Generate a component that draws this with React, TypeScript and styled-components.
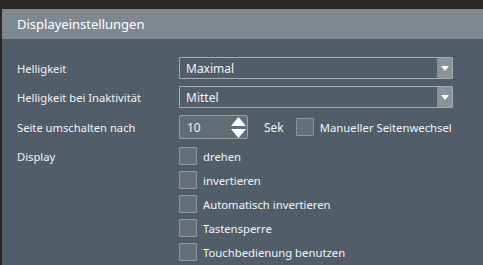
import { createGlobalStyle, styled } from 'styled-components';

const GlobalStyle = createGlobalStyle`
  html, body {
    margin: 0;
    padding: 0;
    background: #2f2726;
    overflow: hidden;
  }
  body {
    font-family: 'Noto Sans', 'Open Sans', sans-serif;
  }
`;

const checkboxes = [
  'drehen',
  'invertieren',
  'Automatisch invertieren',
  'Tastensperre',
  'Touchbedienung benutzen',
];

const App = () => (
  <>
    <GlobalStyle />
    <StScreen>
      <StPanel>
        <StHeader>Displayeinstellungen</StHeader>
        <StBody>
          <StRow>
            <StLabel>Helligkeit</StLabel>
            <Select value="Maximal" />
          </StRow>
          <StRow>
            <StLabel>Helligkeit bei Inaktivität</StLabel>
            <Select value="Mittel" />
          </StRow>
          <StRow>
            <StLabel>Seite umschalten nach</StLabel>
            <StInline>
              <StSpin>
                <span>10</span>
                <StSpinArrows>
                  <svg width="15" height="21" viewBox="0 0 15 21">
                    <path d="M7.5 0 L15 9 L0 9 Z" fill="#ffffff" />
                    <path d="M0 12 L15 12 L7.5 21 Z" fill="#ffffff" />
                  </svg>
                </StSpinArrows>
              </StSpin>
              <StUnit>Sek</StUnit>
              <StCheckItem>
                <StBox />
                Manueller Seitenwechsel
              </StCheckItem>
            </StInline>
          </StRow>
          <StRow $top>
            <StLabel $pad>Display</StLabel>
            <StCheckList>
              {checkboxes.map((item) => (
                <StCheckItem key={item}>
                  <StBox />
                  {item}
                </StCheckItem>
              ))}
            </StCheckList>
          </StRow>
        </StBody>
      </StPanel>
    </StScreen>
  </>
);

const Select = ({ value }: { value: string }) => (
  <StSelect>
    <span>{value}</span>
    <StSelectBtn>
      <svg width="8" height="5" viewBox="0 0 8 5">
        <path d="M0 0 L8 0 L4 5 Z" fill="#ffffff" />
      </svg>
    </StSelectBtn>
  </StSelect>
);

export default App;

const StScreen = styled.div`
  width: 483px;
  height: 265px;
  padding: 9px 0 0 2px;
  box-sizing: border-box;
  display: flex;
  overflow: hidden;
`;

const StPanel = styled.section`
  flex: 1;
  display: flex;
  flex-direction: column;
  background: #515d69;
  overflow: hidden;
`;

const StHeader = styled.header`
  flex-shrink: 0;
  height: 30px;
  padding-left: 15px;
  display: flex;
  align-items: center;
  background: #7f8790;
  color: #ffffff;
  font-size: 13px;
`;

const StBody = styled.div`
  flex-shrink: 0;
  display: flex;
  flex-direction: column;
  gap: 7px;
  padding: 18px 0 0 15px;
  color: #f2f4f6;
  font-size: 11.2px;
  white-space: nowrap;
`;

const StRow = styled.div<{ $top?: boolean }>`
  display: grid;
  grid-template-columns: 162px 274px;
  align-items: ${({ $top }) => ($top ? 'start' : 'center')};
  margin-top: ${({ $top }) => ($top ? '1px' : '0')};
`;

const StLabel = styled.div<{ $pad?: boolean }>`
  padding-top: ${({ $pad }) => ($pad ? '1px' : '0')};
  line-height: 17px;
`;

const StSelect = styled.div`
  height: 22px;
  display: flex;
  box-sizing: border-box;
  border: 1px solid #a3aab1;
  border-radius: 1px;

  & > span {
    flex: 1;
    padding-left: 6px;
    display: flex;
    align-items: center;
    font-size: 12px;
  }
`;

const StSelectBtn = styled.div`
  width: 15px;
  display: flex;
  align-items: center;
  justify-content: center;
  background: #8b9298;
`;

const StInline = styled.div`
  display: flex;
  align-items: center;
`;

const StSpin = styled.div`
  flex-shrink: 0;
  width: 69px;
  height: 24px;
  box-sizing: border-box;
  display: flex;
  align-items: center;
  justify-content: space-between;
  padding: 0 1px 0 7px;
  border: 1px solid #979ea5;
  border-radius: 2px;
  background: #616c77;
  font-size: 12px;
`;

const StSpinArrows = styled.div`
  display: flex;
`;

const StUnit = styled.span`
  margin: 0 12px 0 16px;
  font-size: 12px;
`;

const StCheckList = styled.div`
  display: flex;
  flex-direction: column;
  gap: 6px;
`;

const StCheckItem = styled.label`
  display: flex;
  align-items: center;
  gap: 6px;
  font-size: 11.3px;
`;

const StBox = styled.span`
  flex-shrink: 0;
  width: 18px;
  height: 18px;
  box-sizing: border-box;
  border: 1px solid #8f969d;
  border-radius: 1px;
  background: #646f7a;
`;
